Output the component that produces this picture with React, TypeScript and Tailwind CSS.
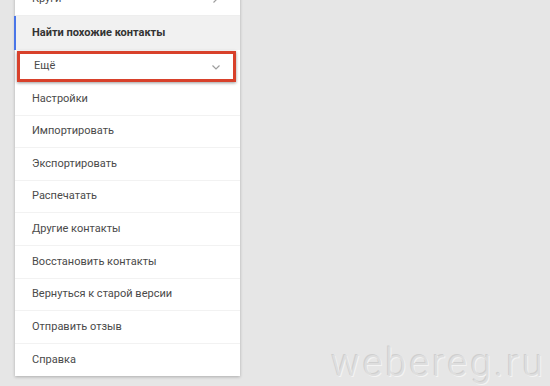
import React from 'react';

const items = [
  'Настройки',
  'Импортировать',
  'Экспортировать',
  'Распечатать',
  'Другие контакты',
  'Восстановить контакты',
  'Вернуться к старой версии',
  'Отправить отзыв',
  'Справка',
];

const Chevron: React.FC<{ dir: 'right' | 'down' }> = ({ dir }) => (
  <svg width="10" height="10" viewBox="0 0 10 10" className="text-[#9e9e9e]">
    {dir === 'down' ? (
      <path d="M1.5 3.5 L5 7 L8.5 3.5" fill="none" stroke="currentColor" strokeWidth="1.2" />
    ) : (
      <path d="M3.5 1.5 L7 5 L3.5 8.5" fill="none" stroke="currentColor" strokeWidth="1.2" />
    )}
  </svg>
);

const App: React.FC = () => {
  return (
    <div
      className="relative w-[550px] h-[386px] overflow-hidden bg-[#e6e6e6]"
      style={{ fontFamily: 'Roboto, "Liberation Sans", Arial, sans-serif' }}
    >
      <div className="ml-[15px] mt-[-17px] w-[225px] bg-white shadow-[0_1px_3px_rgba(0,0,0,0.25)]">
        <div className="flex items-center justify-between h-[33px] pl-[17px] pr-[20px] border-b border-[#eeeeee] text-[11px] text-[#4a4a4a]">
          <span>Круги</span>
          <Chevron dir="right" />
        </div>
        <div className="flex items-center h-[34px] pl-[17px] bg-[#f1f1f1] border-l-2 border-[#4a76e8] -ml-[1px] text-[11px] font-bold text-[#333]">
          <span className="-ml-[1px]">Найти похожие контакты</span>
        </div>
        <div className="py-[1px] pl-[2px] pr-[4px]">
          <div className="flex items-center justify-between h-[31px] pl-[14px] pr-[12px] border-[3px] border-[#d8412b] shadow-[0_1px_3px_rgba(0,0,0,0.4)] text-[11px] text-[#4a4a4a]">
            <span>Ещё</span>
            <Chevron dir="down" />
          </div>
        </div>
        {items.map((t, i) => (
          <div
            key={t}
            className={`flex items-center h-[32.6px] pl-[17px] text-[11px] text-[#4a4a4a] ${i < items.length - 1 ? 'border-b border-[#f2f2f2]' : ''}`}
          >
            {t}
          </div>
        ))}
      </div>
      <div
        className="absolute right-[4px] bottom-[-6px] text-[38px] font-light tracking-[3px] text-[#dedede]"
        style={{ textShadow: '1px 1px 0 #f4f4f4, -1px -1px 0 #cfcfcf' }}
      >
        webereg.ru
      </div>
    </div>
  );
};

export default App;
